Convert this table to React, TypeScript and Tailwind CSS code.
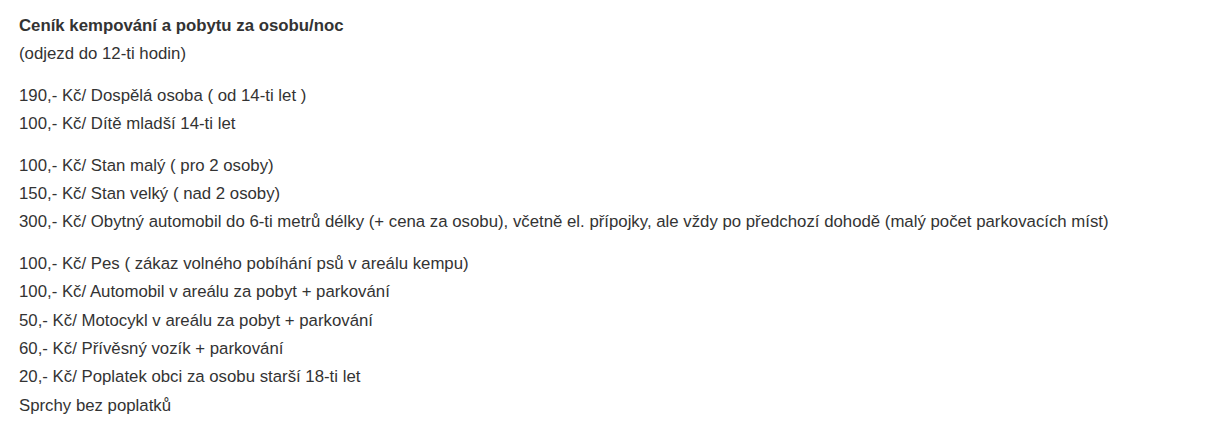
export default function App() {
  const groups: string[][] = [
    ["190,- Kč/ Dospělá osoba ( od 14-ti let )", "100,- Kč/ Dítě mladší 14-ti let"],
    [
      "100,- Kč/ Stan malý ( pro 2 osoby)",
      "150,- Kč/ Stan velký ( nad 2 osoby)",
      "300,- Kč/ Obytný automobil do 6-ti metrů délky (+ cena za osobu), včetně el. přípojky, ale vždy po předchozí dohodě (malý počet parkovacích míst)",
    ],
    [
      "100,- Kč/ Pes ( zákaz volného pobíhání psů v areálu kempu)",
      "100,- Kč/ Automobil v areálu za pobyt + parkování",
      "50,- Kč/ Motocykl v areálu za pobyt + parkování",
      "60,- Kč/ Přívěsný vozík + parkování",
      "20,- Kč/ Poplatek obci za osobu starší 18-ti let",
      "Sprchy bez poplatků",
    ],
  ];
  return (
    <div className="min-h-[432px] w-[1215px] bg-white px-[19px] pt-[12px] text-[16.8px] leading-[28.4px] text-[#333333] [font-family:'Liberation_Sans',Arial,sans-serif]">
      <div className="flex flex-col gap-[13px]">
        <div>
          <div className="font-bold">Ceník kempování a pobytu za osobu/noc</div>
          <div>(odjezd do 12-ti hodin)</div>
        </div>
        {groups.map((g, i) => (
          <div key={i}>
            {g.map((l, j) => (
              <div key={j}>{l}</div>
            ))}
          </div>
        ))}
      </div>
    </div>
  );
}
